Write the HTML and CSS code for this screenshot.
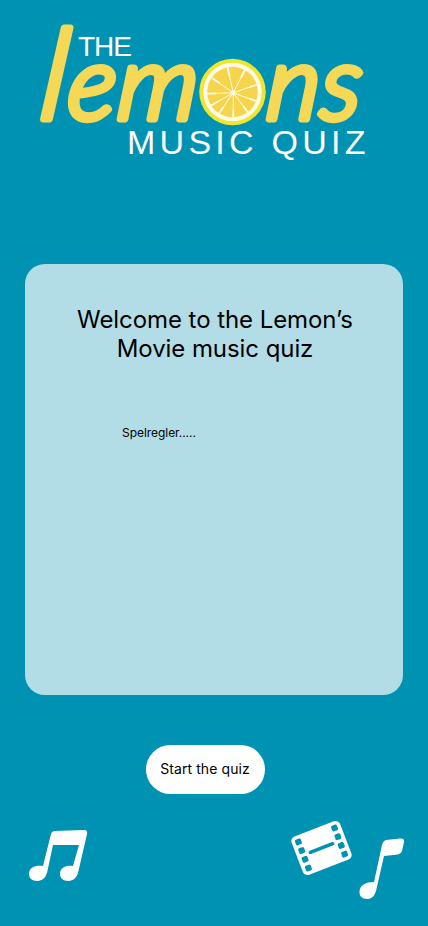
FILE: index.html
```
<!DOCTYPE html>
<html lang="en">
<head>
<meta charset="utf-8">
<meta name="viewport" content="width=device-width, initial-scale=1">
<title>The Lemons Music Quiz</title>
<link rel="stylesheet" href="styles.css">
</head>
<body>
<main class="screen">
  <header class="header">
    <svg class="logo" viewBox="0 0 428 170" role="img" aria-label="The Lemons Music Quiz">
      <text class="logo-small" x="78" y="56" textLength="54">THE</text>
      <text class="logo-tall" transform="translate(38 119) skewX(-6)">l</text>
      <text class="logo-script" transform="translate(0 119) skewX(-5)" x="66 116 265 319"><tspan>em</tspan><tspan>ns</tspan></text>
      <g transform="translate(232.5 92)">
        <circle r="33.3" fill="#f0e52f"/>
        <circle r="29.2" fill="#fffbe8"/>
        <circle r="25.3" fill="#f6d54d"/>
        <g class="pith" transform="translate(.8 .8)">
          <path d="M0 0L-5.700-25.200M0 0L11.700-23M0 0L25-8.600M0 0L24.400 8.800M0 0L15.600 20.800M0 0V26M0 0L-14.800 21.300M0 0L-22.600 13M0 0L-26 .8M0 0L-21.300-14.800"/>
          <path class="pith-rim" d="M-3.700-16.500L-5.700-25.200M7.700-15.100L11.700-23M16.100-5.600L25-8.600M16-5.800M16 5.800L24.400 8.800M10.200 13.600L15.600 20.800M0 17V26M-9.700 13.900L-14.800 21.300M-14.800 8.500L-22.600 13M-17 .5L-26 .8M-13.900-9.700L-21.300-14.800"/>
        </g>
        <circle cx=".8" cy=".8" r="2" fill="#fffbe8"/>
      </g>
      <text class="logo-caption" x="127" y="154" textLength="242">MUSIC QUIZ</text>
    </svg>
  </header>
  <section class="card">
    <h1 class="title">Welcome to the Lemon’s<br>Movie music quiz</h1>
    <p class="rules">Spelregler.....</p>
  </section>
  <button class="start" type="button">Start the quiz</button>
  <footer class="footer">
    <svg class="notes" viewBox="0 0 60 54" aria-hidden="true">
      <path fill="#fff" d="M26 2L55 1Q59 1 58 5L49 44C47 50 43 52 39 52C34 52 31 49 31 45C31 38 38 36 44 37L50 16H24L18 44C16 50 12 52 8 52C3 52 0 49 0 45C0 38 7 36 14 37L22 5Q23 2 26 2Z"/>
    </svg>
    <svg class="media" viewBox="0 0 116 82" aria-hidden="true">
      <g transform="translate(31.5 28) rotate(-21)">
        <rect x="-26" y="-20.5" width="52" height="41" rx="5" fill="#fff"/>
        <path class="film-slot" d="M-12 0H12"/>
        <g fill="#0092b3">
          <rect x="-22.500" y="-17" width="6.200" height="6" rx="1.500"/>
          <rect x="-22.500" y="-7.700" width="6.200" height="6" rx="1.500"/>
          <rect x="-22.500" y="1.700" width="6.200" height="6" rx="1.500"/>
          <rect x="-22.500" y="11" width="6.200" height="6" rx="1.500"/>
          <rect x="16.300" y="-17" width="6.200" height="6" rx="1.500"/>
          <rect x="16.300" y="-7.700" width="6.200" height="6" rx="1.500"/>
          <rect x="16.300" y="1.700" width="6.200" height="6" rx="1.500"/>
          <rect x="16.300" y="11" width="6.200" height="6" rx="1.500"/>
        </g>
      </g>
      <path fill="#fff" d="M96 20L110 18.500Q115 18 114 22L112 31Q111 34 108 34.500L94 36L86 71C84 77 81 79 77 79C72 79 69.500 76 69.500 72C69.500 65 76 62 84 62L92 25Q93 21 96 20Z"/>
    </svg>
  </footer>
</main>
</body>
</html>
```
FILE: styles.css
```
* { box-sizing: border-box; }
body {
  margin: 0;
  background: #0092b3;
  font-family: Inter, "Liberation Sans", sans-serif;
  color: #000;
}
.screen {
  width: 428px;
  height: 926px;
  display: flex;
  flex-direction: column;
  align-items: center;
  overflow: hidden;
}
.header { height: 264px; flex: none; }
.logo { display: block; width: 428px; height: 170px; }
.logo-small, .logo-caption { font-family: "Liberation Sans", sans-serif; fill: #fff; }
.logo-small { font-size: 28px; }
.logo-caption { font-size: 34px; letter-spacing: 3.5px; }
.logo-script, .logo-tall {
  font-family: Lato, sans-serif;
  font-style: italic;
  font-weight: 300;
  fill: #f6d857;
  stroke: #f6d857;
  stroke-linejoin: round;
}
.logo-script { font-size: 102px; stroke-width: 7px; }
.logo-tall { font-size: 125px; stroke-width: 7px; }
.pith { fill: none; stroke: #fffbe8; stroke-width: 1px; }
.pith-rim { stroke-width: 1.8px; }
.card {
  width: 378px;
  height: 431px;
  flex: none;
  padding: 41px 20px 0 22px;
  border-radius: 20px;
  background: #b2dde6;
}
.title {
  margin: 0;
  font-size: 24px;
  line-height: 29px;
  font-weight: 400;
  letter-spacing: -0.07px;
  text-align: center;
}
.rules { margin: 62px 0 0 75px; font-size: 12px; line-height: 15px; letter-spacing: -0.05px; }
.start {
  width: 119px;
  height: 49px;
  flex: none;
  margin: 50px 17px 0 0;
  padding: 0 1px 2px 0;
  border: 0;
  border-radius: 25px;
  background: #fff;
  color: #000;
  font-family: inherit;
  font-size: 14px;
  line-height: 17px;
  letter-spacing: 0.08px;
  white-space: nowrap;
}
.footer {
  width: 100%;
  flex: 1;
  padding: 26px 22px 0 29px;
  display: flex;
  justify-content: space-between;
  align-items: flex-start;
}
.notes { width: 60px; height: 54px; margin-top: 9px; }
.media { width: 116px; height: 82px; }
.film-slot { stroke: #0092b3; stroke-width: 3.5px; stroke-linecap: round; }
```
